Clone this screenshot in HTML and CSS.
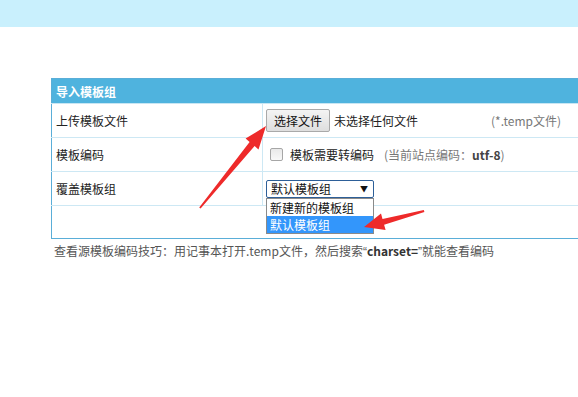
FILE: index.html
```html
<!DOCTYPE html>
<html lang="zh-CN">
<head>
  <meta charset="UTF-8" />
  <title>导入模板组</title>
  <link rel="stylesheet" href="styles.css">
</head>
<body>

  <!-- top bar -->
  <div class="topbar"></div>

  <div class="main">
    <table class="form-table">
      <tr>
        <th colspan="2">导入模板组</th>
      </tr>
      <tr>
        <td class="label">上传模板文件</td>
        <td>
          <div class="field">
            <button class="file-btn">选择文件</button>
            <span class="file-name">未选择任何文件</span>
            <span class="hint hint-file">(*.temp文件)</span>
          </div>
        </td>
      </tr>
      <tr>
        <td class="label">模板编码</td>
        <td>
          <div class="field">
            <input type="checkbox" class="check" id="convert" />
            <label for="convert">模板需要转编码</label>
            <span class="hint hint-charset">(当前站点编码：<b>utf-8</b>)</span>
          </div>
        </td>
      </tr>
      <tr>
        <td class="label">覆盖模板组</td>
        <td>
          <div class="select-wrap">
            <div class="select-box">
              <span>默认模板组</span>
              <span class="caret">▼</span>
            </div>
            <ul class="select-list">
              <li>新建新的模板组</li>
              <li class="active">默认模板组</li>
            </ul>
          </div>
        </td>
      </tr>
      <tr class="empty-row">
        <td></td>
        <td></td>
      </tr>
    </table>

    <p class="tip">查看源模板编码技巧：用记事本打开.temp文件，然后搜索<span class="q">“</span><b>charset=</b><span class="q">”</span>就能查看编码</p>
  </div>

  <!-- red annotation arrows -->
  <svg class="marks" width="578" height="397" viewBox="0 0 578 397">
    <polygon fill="#ee2a2a" points="266,126 258.5,149.5 254.6,146 200.6,208.6 199.2,207.6 249.6,142 245.6,138.6"/>
    <polygon fill="#ee2a2a" points="364,227 385.6,230 384.1,224.8 424.4,211.9 423.8,210.1 382.5,218.9 381,213.6"/>
  </svg>

</body>
</html>
```

FILE: styles.css
```css
* {
  box-sizing: border-box;
}

html {
  overflow: hidden;
}

body {
  margin: 0;
  position: relative;
  width: 578px;
  height: 397px;
  overflow: hidden;
  background: #fff;
  font-family: "Noto Sans CJK SC", "Noto Sans", sans-serif;
  font-size: 12px;
  color: #222;
}

.topbar {
  height: 27px;
  background-color: #c9f0fd;
}

.main {
  padding: 51px 0 0 51px;
}

.form-table {
  width: 528px;
  border-collapse: collapse;
  border: 1px solid #5aaed8;
}

.form-table th {
  height: 25px;
  padding: 0 4px;
  background-color: #4fb3de;
  color: #fff;
  font-weight: bold;
  text-align: left;
  border-bottom: 1px solid #c8e6f3;
}

.form-table td {
  height: 34px;
  padding: 0 0 0 3px;
  border-bottom: 1px solid #cde8f4;
  vertical-align: middle;
}

.form-table td.label {
  width: 211px;
  padding-left: 4px;
  border-right: 1px solid #cde8f4;
}

.form-table tr.empty-row td {
  height: 33px;
  border-bottom: none;
}

.field {
  display: flex;
  align-items: center;
}

.file-btn {
  width: 64px;
  height: 23px;
  padding: 0;
  font-family: inherit;
  font-size: 12px;
  color: #111;
  background: linear-gradient(#f4f4f4, #dedede);
  border: 1px solid #a9a9a9;
  border-radius: 2px;
}

.file-name {
  margin-left: 4px;
}

.hint {
  color: #777;
}

.hint b {
  color: #444;
}

.hint-file {
  margin-left: 73px;
}

.hint-charset {
  margin-left: 10px;
}

.check {
  appearance: none;
  width: 13px;
  height: 13px;
  margin: 0 7px 0 4px;
  border: 1px solid #a6a6a6;
  border-radius: 2px;
  background: linear-gradient(#e9e9e9, #f8f8f8);
}

.select-wrap {
  position: relative;
  width: 108px;
}

.select-box {
  display: flex;
  justify-content: space-between;
  align-items: center;
  height: 18px;
  padding: 0 5px 0 4px;
  border: 1px solid #2d5f98;
  border-radius: 2px;
  background: #fff;
  color: #111;
}

.caret {
  font-size: 8px;
  color: #111;
}

.select-list {
  position: absolute;
  top: 18px;
  left: 0;
  width: 108px;
  margin: 0;
  padding: 0;
  list-style: none;
  background: #fff;
  border: 1px solid #8a8a8a;
}

.select-list li {
  height: 17px;
  line-height: 17px;
  padding-left: 3px;
  color: #111;
}

.select-list li.active {
  background-color: #3396fb;
  color: #fff;
}

.tip {
  margin: 3px 0 0 3px;
  color: #555;
}

.tip b {
  color: #333;
}

.tip .q {
  font-family: "Liberation Sans", sans-serif;
}

.marks {
  position: absolute;
  top: 0;
  left: 0;
  pointer-events: none;
}
```
